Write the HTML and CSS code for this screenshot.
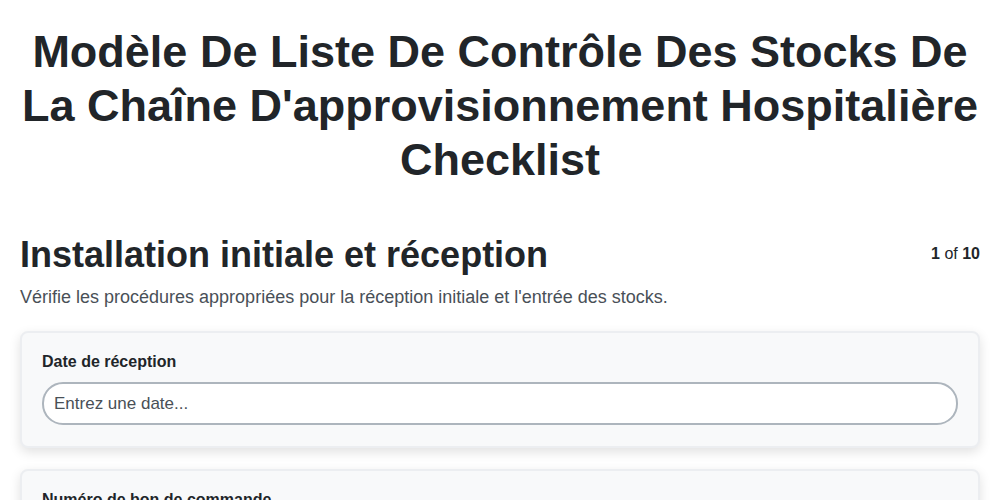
FILE: index.html
```html
<!DOCTYPE html>
<html lang="fr">

<head>
  <meta charset="UTF-8">
  <meta name="viewport" content="width=device-width, initial-scale=1.0">
  <title>Checklist</title>
  <link rel="stylesheet" href="styles.css">
</head>

<body>
  <div class="page">
    <h1 class="title">Modèle De Liste De Contrôle Des Stocks De La Chaîne D'approvisionnement Hospitalière Checklist</h1>

    <div class="section-head">
      <h2 class="section-title">Installation initiale et réception</h2>
      <div class="step"><b>1</b> of <b>10</b></div>
    </div>
    <p class="section-desc">Vérifie les procédures appropriées pour la réception initiale et l'entrée des stocks.</p>

    <div class="card">
      <label class="field-label" for="date">Date de réception</label>
      <input class="field-input" id="date" type="text" placeholder="Entrez une date...">
    </div>

    <div class="card">
      <label class="field-label" for="po">Numéro de bon de commande</label>
      <input class="field-input" id="po" type="text" placeholder="Entrez un numéro...">
    </div>
  </div>
</body>

</html>
```

FILE: styles.css
```css
* {
  margin: 0;
  padding: 0;
  box-sizing: border-box;
}

body {
  font-family: "Liberation Sans", Arial, sans-serif;
  color: #212529;
  background: #fff;
}

.page {
  padding: 20px;
}

.title {
  text-align: center;
  font-size: 45px;
  line-height: 54px;
  font-weight: bold;
  margin: 5px 0 46px;
}

.section-head {
  display: flex;
  justify-content: space-between;
  align-items: flex-start;
}

.section-title {
  font-size: 36px;
  line-height: 1.2;
  font-weight: bold;
}

.step {
  font-size: 16px;
  padding-top: 12px;
}

.section-desc {
  font-size: 18px;
  color: #495057;
  margin-top: 11px;
  margin-bottom: 23px;
}

.card {
  background: #f8f9fa;
  border: 2px solid #eceef1;
  border-radius: 8px;
  box-shadow: 0 4px 12px rgba(0, 0, 0, 0.12);
  padding: 20px 20px 21px;
  margin-bottom: 21px;
}

.field-label {
  display: block;
  font-size: 16px;
  font-weight: bold;
  margin-bottom: 11px;
}

.field-input {
  display: block;
  width: 100%;
  height: 43px;
  border: 2px solid #adb5bd;
  border-radius: 21px;
  padding: 0 10px;
  font-family: inherit;
  font-size: 17px;
  background: #fff;
  color: #212529;
}

.field-input::placeholder {
  color: #495057;
}
```
